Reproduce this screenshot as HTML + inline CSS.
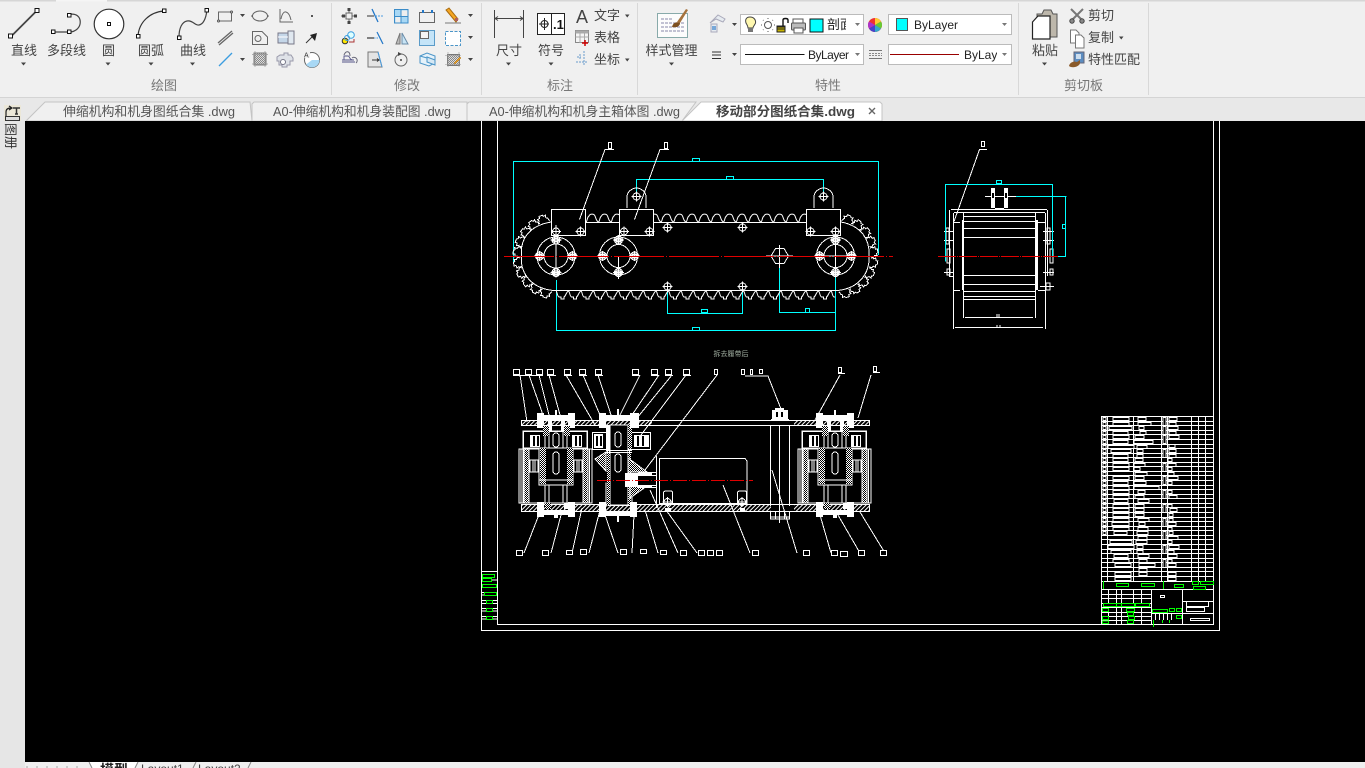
<!DOCTYPE html>
<html><head><meta charset="utf-8"><title>CAD</title>
<style>
html,body{margin:0;padding:0;width:1365px;height:768px;overflow:hidden;background:#000}
svg{display:block;position:absolute;left:0;top:0}
text{font-family:"Liberation Sans","Noto Sans CJK SC",sans-serif}
.l{font-size:13px;fill:#444}
.p{font-size:13px;fill:#777}
.t{font-size:13px;fill:#555}
.ic{fill:none;stroke:#666;stroke-width:1}
.ar{fill:#444}
</style></head><body>
<svg width="1365" height="768" viewBox="0 0 1365 768" xmlns="http://www.w3.org/2000/svg">
<defs>
<pattern id="h" width="3" height="3" patternUnits="userSpaceOnUse" patternTransform="rotate(45)"><rect width="3" height="3" fill="#000"/><rect width="1" height="3" fill="#fff"/></pattern>
<pattern id="x" width="2" height="2" patternUnits="userSpaceOnUse"><rect width="2" height="2" fill="#000"/><rect width="1" height="1" fill="#fff"/><rect x="1" y="1" width="1" height="1" fill="#fff"/></pattern>
<pattern id="g" width="2" height="2" patternUnits="userSpaceOnUse"><rect width="2" height="2" fill="#ddd"/><rect width="1" height="1" fill="#888"/><rect x="1" y="1" width="1" height="1" fill="#888"/></pattern>
<pattern id="tt" x="586" y="213" width="12.5" height="10" patternUnits="userSpaceOnUse"><path d="M0 9C1.500 8 1 4 3 3C4 .5 8 .5 9 3C10 5 10 8 12.500 9" fill="none" stroke="#fff" stroke-width="1"/></pattern>
<pattern id="tb" x="556" y="291" width="12.5" height="10" patternUnits="userSpaceOnUse"><path d="M0 0C1.500 1 1 5 3 6H5V8H8V6C10 5 10 1 12.500 0" fill="none" stroke="#fff" stroke-width="1"/></pattern>
<g id="b" fill="none" stroke="#fff" stroke-width="1"><circle r="3.500"/><path d="M-5 0H5M0-5V5"/></g>
<g id="B" fill="none" stroke="#fff" stroke-width="1"><circle r="4"/><ellipse rx="4" ry="1.500"/><path d="M-5.500 0H5.500M0-5V5M-1.500-3.500V3.500M1.500-3.500V3.500"/></g>
<g id="t"><path d="M-6-35.500C-5-36.500-5-38-4-38.500L-5-40.500L-2.500-41V-43H1L2-41.500L4-42L3.500-39.500L5-38.500L6-35.500" fill="none" stroke="#fff" stroke-width="1"/></g>
<g id="asm" shape-rendering="crispEdges">
 <rect x="-37" y="449" width="73" height="54" fill="none" stroke="#fff"/>
 <rect x="-35" y="449" width="2" height="54" fill="none" stroke="#fff"/>
 <rect x="-32" y="449" width="5" height="54" fill="url(#x)" stroke="#fff"/>
 <rect x="27" y="449" width="5" height="54" fill="url(#x)" stroke="#fff"/>
 <path d="M-32 449H32M33.500 449V503" stroke="#fff" fill="none"/>
 <rect x="-33" y="431" width="64" height="17" fill="#000" stroke="#fff" stroke-width="1.500"/>
 <rect x="-26" y="435" width="10" height="12" fill="#fff"/><rect x="-23" y="436" width="2" height="10" fill="#000"/><rect x="-19" y="436" width="2" height="10" fill="#000"/>
 <rect x="16" y="435" width="10" height="12" fill="#fff"/><rect x="19" y="436" width="2" height="10" fill="#000"/><rect x="23" y="436" width="2" height="10" fill="#000"/>
 <rect x="-17" y="448" width="34" height="37" fill="#000" stroke="#fff"/>
 <rect x="-16" y="448" width="6" height="36" fill="url(#x)"/><rect x="11" y="448" width="6" height="36" fill="url(#x)"/>
 <rect x="-26" y="460" width="8" height="12" fill="#000" stroke="#fff"/><rect x="18" y="460" width="8" height="12" fill="#000" stroke="#fff"/>
 <path d="M-23 460V472M-21 460V472M21 460V472M23 460V472" stroke="#fff"/>
 <path d="M-11 427V448M11 427V448M-7 427V448M7 427V448M-7 485V503M7 485V503M-11 485V503M11 485V503" stroke="#fff" fill="none"/>
 <rect x="-3" y="433" width="6" height="14" rx="3" fill="none" stroke="#fff"/><rect x="-3" y="452" width="6" height="22" rx="3" fill="none" stroke="#fff"/>
 <path d="M-17 480H17" stroke="#fff"/>
 <rect x="-19" y="413" width="7" height="15" fill="#fff"/><rect x="12" y="413" width="7" height="15" fill="#fff"/><rect x="-12" y="415" width="24" height="5" fill="#fff"/>
 <rect x="-19" y="502" width="7" height="15" fill="#fff"/><rect x="12" y="502" width="7" height="15" fill="#fff"/><rect x="-12" y="510" width="24" height="5" fill="#fff"/>
 <rect x="-8" y="420" width="4" height="12" fill="#fff"/><rect x="5" y="420" width="4" height="12" fill="#fff"/>
 <rect x="-11" y="503" width="6" height="6" fill="url(#x)"/><rect x="8" y="503" width="5" height="6" fill="#fff"/>
 <rect x="-13" y="426" width="6" height="10" fill="url(#x)"/><rect x="8" y="426" width="6" height="10" fill="url(#x)"/>
 <rect x="-2" y="515" width="4" height="3" fill="#fff"/><rect x="-1" y="410" width="2" height="6" fill="#fff"/>
</g>
<clipPath id="c1"><rect x="826" y="14" width="20" height="22"/></clipPath>
<clipPath id="c4"><rect x="960" y="44" width="37" height="22"/></clipPath>
</defs>

<!-- ribbon -->
<rect width="1365" height="98" fill="#f0f0f0"/>
<rect width="1365" height="1.500" fill="#d6d6d6"/><rect x="56" width="51" height="1.500" fill="#f5f5f5"/>
<rect y="97" width="1365" height="1" fill="#d4d4d4"/>
<path d="M331.500 3V95M481.500 3V95M637.500 3V95M1018.500 3V95M1148.500 3V95" stroke="#d8d8d8" stroke-width="1"/>
<rect y="98" width="1365" height="23" fill="#e8e8e8"/>
<rect y="121" width="25" height="647" fill="#e6e6e6"/>

<!-- draw big icons -->
<path d="M11 36.500L37 10.500" stroke="#444" stroke-width="1.800"/>
<g fill="#fff" stroke="#111" stroke-width="1"><rect x="8.500" y="34" width="4" height="4"/><rect x="35" y="8.500" width="4" height="4"/>
</g>
<path d="M53 32H69M69 14.500C84 11 84 32 69 32" fill="none" stroke="#444" stroke-width="1.200"/>
<g fill="#fff" stroke="#111"><rect x="51.500" y="30" width="3.500" height="3.500"/><rect x="67.500" y="30" width="3.500" height="3.500"/><rect x="67.500" y="13.500" width="3.500" height="3.500"/></g>
<circle cx="109" cy="24" r="14.800" fill="#fff" stroke="#333" stroke-width="1.200"/><rect x="107.500" y="22.500" width="3" height="3" fill="#fff" stroke="#111"/>
<path d="M138 36C139 22 150 12 164 11" fill="none" stroke="#333" stroke-width="1.200"/>
<g fill="#fff" stroke="#111"><rect x="136.500" y="34.500" width="3.500" height="3.500"/><rect x="162.500" y="9" width="3.500" height="3.500"/></g>
<path d="M179 37C179 28 182 22 187 21C193 20 195 26 199 25C204 24 206 18 207 10" fill="none" stroke="#444" stroke-width="1.200"/>
<g fill="#fff" stroke="#111"><rect x="177.500" y="36" width="3.500" height="3.500"/><rect x="205" y="8.500" width="3.500" height="3.500"/></g>
<text class="l" x="11" y="55">直线</text><text class="l" x="47" y="55">多段线</text><text class="l" x="102" y="55">圆</text><text class="l" x="138" y="55">圆弧</text><text class="l" x="180" y="55">曲线</text>
<path class="ar" d="M21 62.500h5l-2.500 3zM105.500 62.500h5l-2.500 3zM148.500 62.500h5l-2.500 3zM190 62.500h5l-2.500 3zM240 14h5l-2.500 3zM240 58h5l-2.500 3zM468 14h5l-2.500 3zM468 36h5l-2.500 3zM468 58h5l-2.500 3z"/>

<!-- draw small icons -->
<rect x="218.500" y="12" width="13" height="9" class="ic"/><circle cx="218.500" cy="21" r="1" fill="#fff" stroke="#555"/><circle cx="231.500" cy="12" r="1" fill="#fff" stroke="#555"/>
<path d="M218 43L232 31M219 45L233 33" stroke="#666" stroke-width="1.300"/>
<path d="M219 66L232 53" stroke="#3b9de0" stroke-width="1.300"/>
<ellipse cx="260" cy="16" rx="7.500" ry="5" class="ic"/><circle cx="252" cy="16" r=".8" fill="#555"/><circle cx="268" cy="16" r=".8" fill="#555"/>
<path d="M252.500 31.500H262L267.500 37V44.500H252.500Z" class="ic" fill="#fff"/><circle cx="258" cy="38.500" r="3" class="ic"/>
<rect x="254" y="53" width="12" height="12" fill="url(#g)" stroke="#777"/><path d="M252 54.500H268M252 64H268M255 51V67M265 51V67" stroke="#999" stroke-width=".7"/>
<path d="M280 9V22H293M281 19C283 8 289 11 291 20" class="ic"/>
<rect x="278" y="33" width="10" height="10" fill="#c4d6e8" stroke="#778"/><rect x="288" y="31" width="6" height="13" fill="#e0e8f0" stroke="#778"/><path d="M278 37H288" stroke="#fff"/>
<path d="M280 55h4v-2h4v2h3l2 3v3h-3v4h-3v2h-5v-2h-3v-4h-2v-4z" fill="#dfe2e8" stroke="#99a"/><circle cx="283" cy="62" r="2.500" fill="#fff" stroke="#778"/>
<rect x="311" y="15" width="2" height="2" fill="#555"/>
<path d="M306 43L312 37" stroke="#333"/><path d="M310 35L317 33L315 41Z" fill="#222"/>
<circle cx="312" cy="60" r="7.500" fill="#fff" stroke="#666"/><path d="M312 60H319.500A7.500 7.500 0 0 1 306 64.500Z" fill="#a8d8f5"/><rect x="304" y="51" width="6" height="7" fill="#f0f0f0"/><text x="304" y="57.500" font-size="7" fill="#333">A</text>

<!-- modify icons -->
<path d="M341 16H357M349 8V24" stroke="#666"/><rect x="346" y="13" width="6" height="6" fill="#f0f0f0" stroke="#666"/><g fill="#444"><rect x="347.500" y="8" width="3" height="3"/><rect x="347.500" y="21" width="3" height="3"/><rect x="342" y="14.500" width="3" height="3"/><rect x="354" y="14.500" width="3" height="3"/></g>
<circle cx="345" cy="41" r="2.800" fill="#ffe600" stroke="#333"/><circle cx="351" cy="35" r="3.300" fill="#dff" stroke="#3b9de0"/><circle cx="347" cy="38" r="2.500" fill="none" stroke="#3b9de0"/><path d="M349 42H354V39" fill="none" stroke="#a33"/>
<path d="M342 62H355M342 60H354M344 60V56H348C350 56 349 60 353 60" fill="none" stroke="#558" stroke-width=".9"/><path d="M344 55C346 50 350 51 350 56M352 58A3 3 0 0 1 356 63" fill="none" stroke="#667"/>
<path d="M372 9L378 22" stroke="#2277c8" stroke-width="1.300"/><path d="M367 16H374" stroke="#333"/><path d="M375 16H383" stroke="#4b9de0" stroke-dasharray="2 1"/>
<path d="M367 38H374" stroke="#444" stroke-width="1.300"/><path d="M374 38H378" stroke="#4b9de0" stroke-dasharray="1.500 1"/><path d="M377 32L383 44" stroke="#2277c8" stroke-width="1.200"/>
<path d="M368 52H378L382 67H368Z" fill="#e4e4e4" stroke="#777"/><path d="M378 52L382 67" stroke="#4b9de0"/><path d="M372 60H379M377 58.500L379 60L377 61.500" fill="none" stroke="#333"/>
<rect x="394.500" y="9.500" width="13.500" height="13.500" fill="#a8d8f5" stroke="#3b8cc8"/><rect x="395.500" y="17" width="5.500" height="5.500" fill="#eee"/><rect x="401.500" y="10.500" width="6" height="6" fill="#eee"/><path d="M394.500 16.500H408M401 9.500V23" stroke="#3b8cc8"/>
<path d="M402 33L408 44H402Z" fill="#c8e4f5" stroke="#6a8ca8"/><path d="M400 33L396 44H400Z" fill="#bbb" stroke="#777"/>
<circle cx="401" cy="60" r="6" class="ic" stroke-width="1.300"/><circle cx="401" cy="60" r="1" fill="#444"/><path d="M398 52L402 54L398 56Z" fill="#444"/>
<rect x="419.500" y="12.500" width="15" height="10" class="ic" fill="#fff"/><rect x="422" y="10" width="2" height="3" fill="#2277c8"/><rect x="431" y="10" width="2" height="3" fill="#2277c8"/>
<rect x="419.500" y="30.500" width="15" height="15" fill="#c4e4f8" stroke="#5b9bc8"/><rect x="420.500" y="31.500" width="8" height="7" fill="#f4f4f4" stroke="#666"/>
<path d="M420 56L427 53L435 56V63L429 66L420 63Z" fill="#e6f2fa" stroke="#4b95c8"/><path d="M427 57L435 60V65L427 62ZM420 56L427 58" fill="#d6e8f4" stroke="#4b95c8"/>
<path d="M446 10L449 8L458 19L456 22Z" fill="#f5a623" stroke="#a86b10"/><rect x="455" y="18" width="3" height="3" fill="#b06060"/><path d="M445 23H461" stroke="#777"/>
<rect x="445.500" y="31.500" width="15" height="14" fill="#fff" stroke="#4b95c8" stroke-dasharray="3 1.500"/>
<rect x="447.500" y="54.500" width="12" height="11" fill="url(#g)" stroke="#777"/><path d="M445 55.500H461M445 64.500H461M448 52V67M459 52V67" stroke="#999" stroke-width=".6"/><path d="M454 63L460 57L461 58L455 64Z" fill="#f5a623" stroke="#a86b10" stroke-width=".5"/>

<text class="p" x="151" y="90">绘图</text><text class="p" x="394" y="90">修改</text><text class="p" x="547" y="90">标注</text><text class="p" x="815" y="90">特性</text><text class="p" x="1064" y="90">剪切板</text>

<!-- annotate -->
<path d="M494.500 10V38M523.500 10V38M495 18.500H523M498 16.500L495 18.500L498 20.500M520 16.500L523 18.500L520 20.500" fill="none" stroke="#444"/>
<rect x="537.500" y="13.500" width="27" height="21" fill="#fff" stroke="#222"/><path d="M551.500 13.500V34.500M539 24H549" stroke="#222"/><circle cx="544.500" cy="24" r="3.500" fill="none" stroke="#222"/><path d="M544.500 18V30" stroke="#222"/><text x="553" y="29" font-size="13" font-weight="bold" fill="#111">.1</text>
<text class="l" x="496" y="55">尺寸</text><text class="l" x="538" y="55">符号</text>
<path class="ar" d="M506 62.500h5l-2.500 3zM548.500 62.500h5l-2.500 3zM625 14.500h4.500l-2.250 3zM625 58.500h4.500l-2.250 3z"/>
<text x="576" y="23" font-size="18" fill="#444">A</text>
<text class="l" x="594" y="20">文字</text><text class="l" x="594" y="42">表格</text><text class="l" x="594" y="64">坐标</text>
<rect x="575.500" y="30.500" width="13" height="12" fill="#f5f5f5" stroke="#888"/><rect x="575.500" y="30.500" width="13" height="3" fill="#aaa"/><path d="M575.500 37H588.500M580 33V43M584.500 33V43" stroke="#aaa"/><path d="M585 40V46M582 43H588" stroke="#c00" stroke-width="1.500"/>
<path d="M576 62H588M584 51V66M577 57H581M580 54V60" stroke="#6a9ccc" stroke-dasharray="2 1"/>

<!-- style -->
<rect x="657.500" y="13.500" width="30" height="24" fill="#fcfcfc" stroke="#8aa"/><path d="M661 19H673M661 23H684M661 27H684M661 31H684" stroke="#88a" stroke-dasharray="3 1"/>
<path d="M677 22L686 9L688 10L680 23Z" fill="#a5723c"/><path d="M672 27C673 23 676 21 680 23C680 26 677 28 672 27Z" fill="#7c4f20"/>
<text class="l" x="645.500" y="55">样式管理</text>
<path class="ar" d="M669 62.500h5l-2.500 3z"/>

<!-- properties -->
<path d="M710 23L718 15L725 19L723 22L716 19ZM711 24H717V32H711Z" fill="#e6ebf0" stroke="#aab"/><rect x="712" y="26" width="4" height="4" fill="#78a8d8"/>
<path class="ar" d="M732 23h5l-2.500 3zM732 53h5l-2.500 3z"/>
<path d="M712 52H721M712 55H721M712 58.500H721" stroke="#333" stroke-width="1"/>
<g shape-rendering="crispEdges">
<rect x="740.500" y="14.500" width="123" height="20" fill="#fff" stroke="#bbb"/>
<rect x="888.500" y="14.500" width="123" height="20" fill="#fff" stroke="#bbb"/>
<rect x="740.500" y="44.500" width="123" height="20" fill="#fff" stroke="#bbb"/>
<rect x="888.500" y="44.500" width="123" height="20" fill="#fff" stroke="#bbb"/>
</g>
<path d="M750 17C746 17 745 20 746 23C747 25 748 26 748 28H753C753 26 755 25 755.500 23C756 20 754 17 750 17Z" fill="#fff8b0" stroke="#444"/><rect x="748" y="28" width="5" height="4" fill="#777"/>
<circle cx="768" cy="25" r="3.500" fill="#fff" stroke="#555"/><path d="M762 25H761M775 25H774M768 19V18M768 32V31M763.500 20.500L763 20M772.500 20.500L773 20M763.500 29.500L763 30M772.500 29.500L773 30" stroke="#555"/>
<rect x="777" y="26" width="8" height="6" fill="#c8b400" stroke="#222"/><path d="M777 27H785M777 29H785" stroke="#222"/><path d="M783 26V20C783 18 788 18 788 20V23" fill="none" stroke="#111" stroke-width="1.400"/>
<rect x="793" y="19" width="10" height="5" fill="#fff" stroke="#555"/><rect x="791.500" y="23" width="14" height="7" rx="1" fill="#bbb" stroke="#555"/><rect x="794" y="28" width="9" height="5" fill="#fff" stroke="#555"/>
<rect x="810" y="19" width="13" height="13" fill="#0ff" stroke="#111"/>
<text x="827" y="29" font-size="13" fill="#222" clip-path="url(#c1)">剖面线</text>
<path d="M855 23h5l-2.500 3z" fill="#777"/>
<path d="M1002 23h5l-2.500 3zM855 53h5l-2.500 3zM1002 53h5l-2.500 3z" fill="#777"/>
<circle cx="875" cy="25" r="7" fill="#e33"/><path d="M875 25V18A7 7 0 0 1 881 21.500Z" fill="#fc3"/><path d="M875 25L881 21.500A7 7 0 0 1 881 28.500Z" fill="#6c3"/><path d="M875 25L881 28.500A7 7 0 0 1 875 32Z" fill="#3ac"/><path d="M875 25V32A7 7 0 0 1 869 28.500Z" fill="#44c"/><path d="M875 25L869 28.500A7 7 0 0 1 869 21.500Z" fill="#a3c"/>
<rect x="896.500" y="18.500" width="11" height="12" fill="#0ff" stroke="#555"/>
<text x="914" y="29" font-size="12" fill="#222">ByLayer</text>
<path d="M745 54.500H804.500" stroke="#111"/><text x="808" y="59" font-size="12" fill="#222" textLength="41">ByLayer</text>
<path d="M890 54.500H959" stroke="#900"/><text x="964" y="59" font-size="12" fill="#222" clip-path="url(#c4)">ByLayer</text>
<g shape-rendering="crispEdges"><path d="M869 50.500H882M869 58.500H882" stroke="#777"/><path d="M869 53.500H882M869 55.500H882" stroke="#888" stroke-dasharray="2 1"/></g>

<!-- clipboard -->
<path d="M1037 14H1042L1044 10H1051L1053 14H1057V37H1049V28H1037Z" fill="#bdb7ab" stroke="#555"/>
<path d="M1032.500 22L1038 16H1050V39H1032.500Z" fill="#fff" stroke="#222" stroke-width="1.200"/>
<text class="l" x="1032" y="55">粘贴</text>
<path class="ar" d="M1042 62.500h5l-2.500 3zM1119 36.500h4.500l-2.250 3z"/>
<path d="M1071 9L1083 21M1083 9L1071 21" stroke="#777" stroke-width="2"/><circle cx="1072" cy="21" r="2.200" fill="#888" stroke="#444"/><circle cx="1082" cy="21" r="2.200" fill="#888" stroke="#444"/>
<path d="M1070.500 30H1076L1079 33V43H1070.500Z" fill="#fff" stroke="#777"/><path d="M1075.500 35H1081L1084 38V48H1075.500Z" fill="#fff" stroke="#777"/>
<rect x="1074" y="52" width="10" height="11" fill="#5b8cc0" stroke="#667"/><rect x="1076" y="54" width="5" height="5" fill="#cde"/>
<path d="M1069 66C1070 62 1074 61 1077 62L1080 60V63C1080 66 1073 69 1069 66Z" fill="#8a5a2a"/>
<text class="l" x="1088" y="20">剪切</text><text class="l" x="1088" y="42">复制</text><text class="l" x="1088" y="64">特性匹配</text>

<!-- doc tabs -->
<path d="M26 121L45 102H250L252 121Z" fill="#f0f0f0" stroke="#c4c4c4"/>
<path d="M252 121V104L254 102H467V121Z" fill="#f0f0f0" stroke="#c4c4c4"/>
<path d="M467 121V104L469 102H696L682 121Z" fill="#f0f0f0" stroke="#c4c4c4"/>
<path d="M682 121L701 102H880L882 104V121Z" fill="#fff" stroke="#c4c4c4"/>
<text class="t" x="63" y="116" textLength="172" lengthAdjust="spacingAndGlyphs">伸缩机构和机身图纸合集 .dwg</text>
<text class="t" x="273" y="116" textLength="178" lengthAdjust="spacingAndGlyphs">A0-伸缩机构和机身装配图 .dwg</text>
<text class="t" x="489" y="116" textLength="191" lengthAdjust="spacingAndGlyphs">A0-伸缩机构和机身主箱体图 .dwg</text>
<text x="716" y="116" font-size="13" font-weight="bold" fill="#444" textLength="139" lengthAdjust="spacingAndGlyphs">移动部分图纸合集.dwg</text>
<path d="M869 108L875 114M875 108L869 114" stroke="#666" stroke-width="1.400"/>

<!-- left rail -->
<rect x="4" y="105" width="17" height="16" fill="#ebe7d8"/>
<path d="M6 112V118M6 112C6 109 8 108 11 108M9 106L12 108L9 110" fill="none" stroke="#222" stroke-width="1.200"/>
<path d="M13 108H20M16.500 108V114M15 114H18" stroke="#333" stroke-width="1.500"/>
<rect x="5.500" y="116.500" width="14" height="4" fill="#ddd" stroke="#333"/>
<text transform="translate(6 123) rotate(90)" font-size="13" fill="#333">图册</text>

<!-- canvas -->
<rect x="25" y="121" width="1340" height="641" fill="#000"/>

<!-- bottom tabs -->
<rect x="25" y="762" width="1340" height="6" fill="#efefef"/>
<path d="M88 762L92 768H135L138 762Z" fill="#fff"/>
<path d="M92 768L89 762M135 768L138 762M193 768L196 762M248 768L251 762" stroke="#888" fill="none"/>
<path d="M26 767H85" stroke="#aaa" stroke-dasharray="2 8"/>
<text x="100" y="775" font-size="14" font-weight="bold" fill="#222">模型</text>
<text x="141" y="773" font-size="12" fill="#444">Layout1</text>
<text x="198" y="773" font-size="12" fill="#444">Layout2</text>

<!-- DRAWING -->
<g shape-rendering="crispEdges">
<path d="M481.500 121V630.500H1219.500V121M497.500 121V624.500H1213.500V121" fill="none" stroke="#fff"/>

<!-- left strip -->
<path d="M481 571.500H497M481 580H497M481 592.500H497M481 595H497M481 600.500H497M481 603.500H497M481 608.500H497M481 611H497M481 616.500H497M481 619H497" stroke="#fff" fill="none"/>
<g fill="#000" stroke="#0f0"><rect x="482.500" y="574.500" width="12" height="3"/><rect x="482.500" y="578.500" width="9" height="3"/><rect x="482.500" y="584.500" width="14" height="3"/><rect x="484.500" y="592.500" width="12" height="3"/><rect x="486.500" y="600.500" width="6" height="3"/><rect x="486.500" y="608.500" width="6" height="3"/><rect x="486.500" y="616.500" width="6" height="3"/></g>

<!-- front view cyan -->
<g fill="none" stroke="#0ff">
<path d="M513.500 263V161.500H878.500V255"/><rect x="692.500" y="158.500" width="7" height="3"/>
<path d="M636.500 196V179.500H823.500V196"/><rect x="726.500" y="176.500" width="7" height="3"/>
<path d="M556.500 280V330.500H835.500V275"/><rect x="692.500" y="327.500" width="7" height="3"/>
<path d="M667.500 290V313.500H742.500V290"/><rect x="701.500" y="309.500" width="6" height="3"/>
<path d="M779.500 262V312.500H835.500"/><rect x="805.500" y="308.500" width="4" height="4"/>
</g>
<!-- boxes -->
<g fill="#000" stroke="#fff">
<rect x="586" y="213" width="33" height="10" fill="url(#tt)" stroke="none"/>
<rect x="654" y="213" width="152" height="10" fill="url(#tt)" stroke="none"/>
<rect x="556" y="291" width="279" height="10" fill="url(#tb)" stroke="none"/>
</g>
<path d="M586 222.500H619M654 222.500H806M553 290.500H838M551 222C528 226 520 240 521.500 256C520 272 530 288 553 290.500M841 222C862 226 870 240 869 256C870 272 860 288 838 290.500" fill="none" stroke="#fff"/>
<g fill="#000" stroke="#fff">
<rect x="551.500" y="209.500" width="34" height="26"/><rect x="619.500" y="209.500" width="34" height="26"/><rect x="806.500" y="209.500" width="34" height="26"/>
</g>
<!-- teeth round -->
<use href="#t" transform="translate(556 256) rotate(-20)"/><use href="#t" transform="translate(556 256) rotate(-36)"/><use href="#t" transform="translate(556 256) rotate(-52)"/><use href="#t" transform="translate(556 256) rotate(-68)"/><use href="#t" transform="translate(556 256) rotate(-84)"/><use href="#t" transform="translate(556 256) rotate(-100)"/><use href="#t" transform="translate(556 256) rotate(-116)"/><use href="#t" transform="translate(556 256) rotate(-132)"/><use href="#t" transform="translate(556 256) rotate(-148)"/><use href="#t" transform="translate(556 256) rotate(-164)"/>
<use href="#t" transform="translate(835 256) rotate(20)"/><use href="#t" transform="translate(835 256) rotate(36)"/><use href="#t" transform="translate(835 256) rotate(52)"/><use href="#t" transform="translate(835 256) rotate(68)"/><use href="#t" transform="translate(835 256) rotate(84)"/><use href="#t" transform="translate(835 256) rotate(100)"/><use href="#t" transform="translate(835 256) rotate(116)"/><use href="#t" transform="translate(835 256) rotate(132)"/><use href="#t" transform="translate(835 256) rotate(148)"/><use href="#t" transform="translate(835 256) rotate(164)"/>
<g fill="none" stroke="#fff">
<circle cx="556" cy="256" r="19"/><circle cx="556" cy="256" r="12"/>
<circle cx="618.500" cy="256" r="19"/><circle cx="618.500" cy="256" r="11.500"/>
<circle cx="835.500" cy="256" r="19"/><circle cx="835.500" cy="256" r="11.500"/>
<path d="M771 256L775.500 248.500H784L788.500 256L784 263.500H775.500Z"/>
<path d="M627 208V197C627 191 633 188 636.500 188C640 188 646 191 646 197V208M814 208V197C814 191 820 188 823.500 188C827 188 833 191 833 197V208"/>
</g>
<path d="M766 256H793M779.500 245V268M556 225V270M618.500 256V279M835.500 240V272M820 256H851" stroke="#fff" fill="none"/>
<use href="#B" x="556" y="240"/><use href="#B" x="556" y="272.500"/><use href="#B" x="539.500" y="256"/><use href="#B" x="572.500" y="256"/>
<use href="#B" x="618.500" y="240"/><use href="#B" x="618.500" y="272.500"/><use href="#B" x="602.500" y="256"/><use href="#B" x="634.500" y="256"/>
<use href="#B" x="835.500" y="240"/><use href="#B" x="835.500" y="272.500"/><use href="#B" x="819.500" y="256"/><use href="#B" x="851.500" y="256"/>
<use href="#b" x="556" y="231.500"/><use href="#b" x="580.500" y="231.500"/><use href="#b" x="624" y="231.500"/><use href="#b" x="649.500" y="231.500"/><use href="#b" x="810.500" y="231.500"/><use href="#b" x="835.500" y="231.500"/>
<use href="#b" x="667.500" y="227.500"/><use href="#b" x="742.500" y="227.500"/><use href="#b" x="667.500" y="286.500"/><use href="#b" x="742.500" y="286.500"/><use href="#b" x="636.500" y="196.500"/><use href="#b" x="823.500" y="196.500"/>
<path d="M579.500 219.500L605 149.500H614M634.500 219.500L660 149.500H669" fill="none" stroke="#fff"/>
<g fill="none" stroke="#fff"><rect x="608.500" y="142.500" width="3" height="6"/><rect x="664.500" y="142.500" width="3" height="6"/></g>
<path d="M504 256.500H893" stroke="#e00000" stroke-width="1" stroke-dasharray="50 2 1 2"/>

<!-- side view -->
<g fill="none" stroke="#fff">
<path d="M953.500 213V329M1045.500 213V329M963.500 213V318M1035.500 213V318M949.500 210V276M1047.500 210V276"/>
<path d="M951 209.500H1047M954 212.500H1045M963 216.500H1035M963 221.500H1035M963 228.500H1035M963 237.500H1035M963 275.500H1035M963 284.500H1035M963 291.500H1035M963 296.500H1035M963 299.500H1035M965 317.500H1033M955 327.500H1043"/>
<path d="M985 196.500H1016M953 222.500H960M1038 222.500H1046M953 290.500H960M1038 290.500H1046M953 276.500H949"/>
<rect x="946" y="228" width="3" height="16"/><rect x="1047" y="228" width="3" height="16"/>
<rect x="947" y="249" width="3" height="14"/><rect x="1050" y="249" width="3" height="14"/><rect x="947" y="269" width="3" height="6"/><rect x="1050" y="269" width="3" height="6"/>
<path d="M944 231.500H954M944 240.500H954M1043 231.500H1054M1043 240.500H1054M944 272.500H954M1043 272.500H1054M1040 286.500H1054"/>
<rect x="1046" y="283" width="4" height="7"/>
<path d="M997 317V314M999 317V314M997 327V325M1000 327V325"/>
</g>
<g fill="#fff"><rect x="991" y="188" width="4" height="20"/><rect x="1004" y="188" width="4" height="20"/><rect x="962" y="220" width="2" height="70"/><rect x="1035" y="220" width="3" height="70"/><rect x="992" y="193" width="2" height="5" fill="#000"/><rect x="1005" y="193" width="2" height="5" fill="#000"/><rect x="995" y="208" width="9" height="1"/></g>
<path d="M954 221.500L979.500 149.500H987" fill="none" stroke="#fff"/>
<g fill="none" stroke="#0ff">
<path d="M945.500 261.500V184.500H1052.500V256.500"/><rect x="996.500" y="180.500" width="5" height="3"/>
<path d="M1016 196.500H1066.500M1065.500 196.500V256.500H1058"/><rect x="1062.500" y="224.500" width="3" height="4"/>
</g>
<path d="M938 256.500H1058" stroke="#e00000" stroke-width="1" stroke-dasharray="18 1 1 1"/>
<rect x="981.500" y="141.500" width="3" height="5" fill="none" stroke="#fff"/>

<!-- section view -->
<rect x="521.500" y="420.500" width="348" height="5" fill="none" stroke="#fff"/>
<rect x="521.500" y="504.500" width="348" height="7" fill="url(#h)" stroke="#fff"/>
<rect x="522" y="421" width="130" height="4" fill="url(#h)"/><rect x="794" y="421" width="75" height="4" fill="url(#h)"/>
<rect x="771" y="505" width="23" height="6" fill="#000"/>
<use href="#asm" x="556"/>
<use href="#asm" x="835"/>
<!-- middle assembly -->
<rect x="592.500" y="432.500" width="58" height="17" fill="#000" stroke="#fff" stroke-width="1"/>
<rect x="594" y="434" width="9" height="14" fill="#fff"/><rect x="596" y="436" width="2" height="10" fill="#000"/><rect x="600" y="436" width="2" height="10" fill="#000"/>
<rect x="634" y="435" width="15" height="12" fill="#fff"/><rect x="637" y="436" width="2" height="10" fill="#000"/><rect x="642" y="436" width="2" height="10" fill="#000"/>
<rect x="610" y="425" width="18" height="80" fill="#000" stroke="#fff"/>
<rect x="607" y="450" width="3" height="55" fill="url(#x)"/><rect x="628" y="450" width="3" height="55" fill="url(#x)"/>
<rect x="606" y="425" width="4" height="24" fill="#fff"/><rect x="628" y="425" width="4" height="24" fill="url(#x)"/>
<rect x="615" y="432" width="6" height="15" rx="3" fill="none" stroke="#fff"/><rect x="615" y="454" width="6" height="18" rx="3" fill="none" stroke="#fff"/>
<path d="M606 450.500H632M606 452.500H632M606 482.500V505M632 482.500V505M608 505.500H632" stroke="#fff"/>
<rect x="599" y="413" width="7" height="15" fill="#fff"/><rect x="630" y="413" width="9" height="15" fill="#fff"/><rect x="606" y="415" width="24" height="5" fill="#fff"/>
<rect x="599" y="502" width="7" height="15" fill="#fff"/><rect x="630" y="502" width="7" height="15" fill="#fff"/><rect x="606" y="512" width="24" height="4" fill="#fff"/>
<rect x="617" y="409" width="2" height="6" fill="#fff"/><rect x="617" y="516" width="2" height="6" fill="#fff"/>
<path d="M595 459L606 452V471ZM628 458L647 472H628ZM630 498L647 486H630Z" fill="url(#x)" stroke="#fff"/>
<rect x="625" y="473" width="13" height="14" fill="#fff"/><rect x="638" y="472" width="14" height="4" fill="#fff"/><rect x="638" y="485" width="14" height="3" fill="#fff"/>
<path d="M652 472.500H656M652 475.500H656M652 485.500H656M652 487.500H656" stroke="#fff"/>
<!-- box -->
<path d="M656.500 456V508M659.500 458V505M659 458.500H745L747 461V503.500H659" fill="none" stroke="#fff"/>
<path d="M663.500 503V493C663.500 492 664 491 666 491H671C672 491 672.500 492 672.500 493V503M737.500 503V493C737.500 492 738 491 740 491H745C746 491 746.500 492 746.500 493V503" fill="none" stroke="#fff"/>
<use href="#b" x="667.500" y="502"/><use href="#b" x="742" y="502"/>
<rect x="665" y="508" width="6" height="4" fill="#fff"/><rect x="740" y="508" width="5" height="4" fill="#fff"/>
<!-- post -->
<path d="M770.500 425V506M779.500 425V506M789.500 425V506M770.500 512V519H789.500V512M770.500 517H789.500M775.500 512V519M784.500 512V519M779.500 506V523" fill="none" stroke="#fff"/>
<rect x="772" y="410" width="16" height="9" fill="#fff"/><rect x="776" y="412" width="2" height="5" fill="#000"/><rect x="781" y="412" width="2" height="5" fill="#000"/><rect x="775" y="408" width="9" height="2" fill="#fff"/>
<rect x="771" y="419" width="18" height="2" fill="#fff"/>
<path d="M772 470L797 553M803 553H810" fill="none" stroke="#fff"/>
<path d="M597 480.500H753" stroke="#e00000" stroke-width="1" stroke-dasharray="14 2 1 2"/>

<!-- leaders -->
<path fill="none" stroke="#fff" stroke-width="1" d="M520 375L527 422M529 375L543 415M539 375L549 415M549 375L560 415M566 375L595 425M583 375L600 415M598 375L611 415M640 375L620 415M659 375L632 415M672 375L637 418M686 375L641 435M717 375L645 470M745 376H768L781 409M840 375L815 420M871 375L858 418M524 553L540 512M551 553L561 515M572 553L582 508M589 553L600 510M618 553L605 515M632 553L634 515M658 553L645 510M678 553L650 490M697 553L666 510M750 553L723 485M831 553L820 515M860 553L838 515M885 553L860 512M513 375.500H532M525 375.500H543M547 375.500H556M564 375.500H572M579 375.500H587M595 375.500H603M632 375.500H640M651 375.500H659M665 375.500H673M683 375.500H691M838 373.500H845M873 372.500H880"/>
<g fill="#000" stroke="#fff">
<rect x="513.500" y="369.500" width="6" height="5"/><rect x="525.500" y="369.500" width="6" height="5"/><rect x="536.500" y="369.500" width="6" height="5"/><rect x="547.500" y="369.500" width="6" height="5"/><rect x="564.500" y="369.500" width="6" height="5"/><rect x="579.500" y="369.500" width="6" height="5"/><rect x="595.500" y="369.500" width="6" height="5"/><rect x="632.500" y="369.500" width="6" height="5"/><rect x="651.500" y="369.500" width="6" height="5"/><rect x="665.500" y="369.500" width="6" height="5"/><rect x="683.500" y="369.500" width="6" height="5"/><rect x="714.500" y="369.500" width="3" height="5"/>
<rect x="741.500" y="369.500" width="3" height="5"/><rect x="750.500" y="369.500" width="2" height="5"/><rect x="759.500" y="369.500" width="3" height="4"/><rect x="838.500" y="367.500" width="3" height="5"/><rect x="873.500" y="366.500" width="3" height="5"/>
<rect x="516.500" y="550.500" width="6" height="5"/><rect x="542.500" y="550.500" width="6" height="5"/><rect x="566.500" y="550.500" width="6" height="4"/><rect x="580.500" y="549.500" width="6" height="5"/><rect x="620.500" y="549.500" width="6" height="5"/><rect x="640.500" y="549.500" width="6" height="4"/><rect x="660.500" y="550.500" width="6" height="4"/><rect x="680.500" y="550.500" width="6" height="5"/><rect x="698.500" y="550.500" width="6" height="5"/><rect x="707.500" y="550.500" width="6" height="5"/><rect x="716.500" y="550.500" width="6" height="5"/><rect x="752.500" y="550.500" width="6" height="5"/><rect x="803.500" y="550.500" width="6" height="5"/><rect x="831.500" y="550.500" width="6" height="5"/><rect x="840.500" y="551.500" width="7" height="5"/><rect x="858.500" y="550.500" width="6" height="5"/><rect x="880.500" y="550.500" width="6" height="5"/>
</g>

<!-- parts table -->
<g fill="none" stroke="#fff">
<path d="M1101.500 416V624M1107.500 416V581M1133.500 416V581M1161.500 416V581M1167.500 416V581M1191.500 416V581M1198.500 416V581M1205.500 416V581M1101 416.500H1213M1101 581.500H1213"/>
<path d="M1101 421.500H1213M1101 425.500H1213M1101 430.500H1213M1101 434.500H1213M1101 439.500H1213M1101 444.500H1213M1101 448.500H1213M1101 453.500H1213M1101 457.500H1213M1101 462.500H1213M1101 466.500H1213M1101 471.500H1213M1101 475.500H1213M1101 480.500H1213M1101 485.500H1213M1101 489.500H1213M1101 494.500H1213M1101 498.500H1213M1101 503.500H1213M1101 507.500H1213M1101 512.500H1213M1101 517.500H1213M1101 521.500H1213M1101 526.500H1213M1101 530.500H1213M1101 535.500H1213M1101 539.500H1213M1101 544.500H1213M1101 549.500H1213M1101 553.500H1213M1101 558.500H1213M1101 562.500H1213M1101 567.500H1213M1101 571.500H1213M1101 576.500H1213"/>
</g>
<g fill="#000" stroke="#fff">
<path d="M1113 417.500h16v3h-16zM1113 422.500h16v3h-16zM1109 426.500h23v3h-23zM1113 431.500h15v3h-15zM1113 435.500h16v3h-16zM1113 440.500h15v3h-15zM1108 445.500h26v3h-26zM1111 449.500h20v3h-20zM1113 454.500h15v3h-15zM1113 458.500h15v3h-15zM1113 463.500h16v3h-16zM1113 467.500h16v3h-16zM1113 476.500h16v3h-16zM1113 481.500h15v3h-15zM1113 486.500h16v3h-16zM1113 490.500h16v3h-16zM1113 495.500h16v3h-16zM1114 499.500h14v3h-14zM1113 504.500h16v3h-16zM1113 508.500h16v3h-16zM1113 513.500h16v3h-16zM1113 518.500h16v3h-16zM1112 522.500h17v3h-17zM1113 527.500h16v3h-16zM1114 531.500h13v3h-13zM1110 540.500h22v3h-22zM1108 545.500h26v3h-26zM1111 550.500h20v3h-20zM1114 554.500h14v3h-14zM1113 559.500h16v3h-16zM1115 563.500h16v3h-16zM1115 572.500h16v3h-16zM1115 577.500h16v3h-16z"/>
<path d="M1138 417.500h8v3h-8zM1138 422.500h13v3h-13zM1139 426.500h5v3h-5zM1140 431.500h6v3h-6zM1135 435.500h9v3h-9zM1134 440.500h19v3h-19zM1137 445.500h10v3h-10zM1137 449.500h6v3h-6zM1137 454.500h6v3h-6zM1135 458.500h8v3h-8zM1134 463.500h11v3h-11zM1134 467.500h6v3h-6zM1135 472.500h12v3h-12zM1135 476.500h9v3h-9zM1134 481.500h12v3h-12zM1134 486.500h25v3h-25zM1138 490.500h7v3h-7zM1135 495.500h9v3h-9zM1138 499.500h11v3h-11zM1135 504.500h9v3h-9zM1135 508.500h9v3h-9zM1135 513.500h9v3h-9zM1138 518.500h11v3h-11zM1139 522.500h6v3h-6zM1138 527.500h10v3h-10zM1137 531.500h11v3h-11zM1138 536.500h9v3h-9zM1136 540.500h11v3h-11zM1137 545.500h6v3h-6zM1137 550.500h6v3h-6zM1138 554.500h11v3h-11zM1139 559.500h8v3h-8zM1139 563.500h16v3h-16zM1139 568.500h8v3h-8zM1139 572.500h8v3h-8z"/>
<path d="M1169 417.500h8v3h-8zM1169 422.500h7v3h-7zM1168 426.500h10v3h-10zM1169 431.500h7v3h-7zM1169 435.500h10v3h-10zM1169 444.500h6v3h-6zM1169 449.500h7v3h-7zM1169 454.500h7v3h-7zM1168 458.500h4v3h-4zM1168 463.500h8v3h-8zM1168 467.500h4v3h-4zM1168 472.500h6v3h-6zM1168 476.500h10v3h-10zM1168 481.500h4v3h-4zM1168 490.500h4v3h-4zM1169 495.500h8v3h-8zM1168 504.500h4v3h-4zM1170 508.500h7v3h-7zM1169 513.500h4v3h-4zM1169 518.500h4v3h-4zM1168 522.500h8v3h-8zM1168 527.500h4v3h-4zM1169 531.500h4v3h-4zM1168 536.500h10v3h-10zM1168 540.500h4v3h-4zM1169 545.500h10v3h-10zM1168 550.500h6v3h-6zM1168 554.500h9v3h-9zM1168 559.500h4v3h-4zM1168 563.500h8v3h-8zM1168 572.500h8v3h-8zM1168 577.500h8v3h-8z"/>
<path d="M1103 417.500h3v3h-3zM1103 422.500h3v3h-3zM1103 426.500h3v3h-3zM1103 431.500h3v3h-3zM1103 435.500h3v3h-3zM1103 440.500h3v3h-3zM1103 445.500h3v3h-3zM1103 449.500h3v3h-3zM1103 454.500h3v3h-3zM1103 458.500h3v3h-3zM1103 463.500h3v3h-3zM1103 467.500h3v3h-3zM1103 472.500h3v3h-3zM1103 476.500h3v3h-3zM1103 481.500h3v3h-3zM1103 486.500h3v3h-3zM1103 490.500h3v3h-3zM1103 495.500h3v3h-3zM1103 499.500h3v3h-3zM1103 504.500h3v3h-3zM1103 508.500h3v3h-3zM1103 513.500h3v3h-3zM1103 518.500h3v3h-3zM1103 522.500h3v3h-3zM1103 527.500h3v3h-3zM1103 531.500h3v3h-3z"/>
<path d="M1163 417.500h3v8h-3zM1163 426.500h3v8h-3zM1163 435.500h3v8h-3zM1163 449.500h3v8h-3zM1163 463.500h3v8h-3zM1163 476.500h3v8h-3zM1163 490.500h3v8h-3zM1163 504.500h3v8h-3zM1163 518.500h3v8h-3zM1163 531.500h3v8h-3zM1163 545.500h3v8h-3zM1163 559.500h3v8h-3z"/>
</g>

<!-- title block -->
<g fill="none">
<path stroke="#fff" d="M1101 589.500H1213M1101 594.500H1151M1101 598.500H1151M1101 603.500H1151M1101 607.500H1151M1101 612.500H1151M1101 616.500H1151M1101 620.500H1151M1108.500 589V624M1116.500 589V624M1121.500 589V624M1133.500 589V624M1141.500 589V624M1151.500 589V624M1182.500 589V624M1183 601.500H1213M1183 613.500H1213"/>
<path stroke="#fff" d="M1186.500 602V606.500H1208.500V602M1186.500 607.500H1204.500V611.500H1186.500ZM1190.500 618.500H1209.500V620.500H1190.500Z"/>
<path stroke="#fff" d="M1151 613.500H1182M1155.500 613V620M1159.500 613V620M1163.500 613V620M1167.500 613V620M1171.500 613V620"/>
<rect x="1160.500" y="595.500" width="4" height="2" stroke="#fff" fill="#000"/>
<g stroke="#0f0" fill="#000">
<rect x="1103.500" y="603.500" width="13" height="3"/><rect x="1116.500" y="603.500" width="9" height="3"/><rect x="1121.500" y="603.500" width="13" height="3"/><rect x="1135.500" y="603.500" width="14" height="3"/>
<rect x="1102.500" y="608.500" width="6" height="3"/><rect x="1126.500" y="608.500" width="8" height="3"/><rect x="1127.500" y="612.500" width="6" height="3"/><rect x="1128.500" y="616.500" width="6" height="3"/><rect x="1127.500" y="620.500" width="6" height="3"/><rect x="1102.500" y="616.500" width="6" height="3"/><rect x="1102.500" y="621" width="6" height="2.500"/>
<rect x="1116.500" y="583.500" width="12" height="3"/><rect x="1141.500" y="583.500" width="13" height="3"/><rect x="1174.500" y="584.500" width="9" height="3"/><rect x="1192.500" y="581.500" width="6" height="3"/><rect x="1200.500" y="581.500" width="13" height="3"/><rect x="1193.500" y="586.500" width="12" height="3"/>
<rect x="1152.500" y="609.500" width="15" height="3"/><rect x="1169.500" y="608.500" width="5" height="3"/><rect x="1176.500" y="608.500" width="5" height="3"/><rect x="1176.500" y="615.500" width="5" height="3"/>
</g>
<path stroke="#0f0" d="M1103.500 581V589M1163.500 581V589M1153.500 620V627M1162.500 620V623M1169.500 620V623"/>
</g>
</g>
<text x="713.500" y="356" font-size="7" fill="#a4b2a4">拆去履带后</text>
</svg>
</body></html>
